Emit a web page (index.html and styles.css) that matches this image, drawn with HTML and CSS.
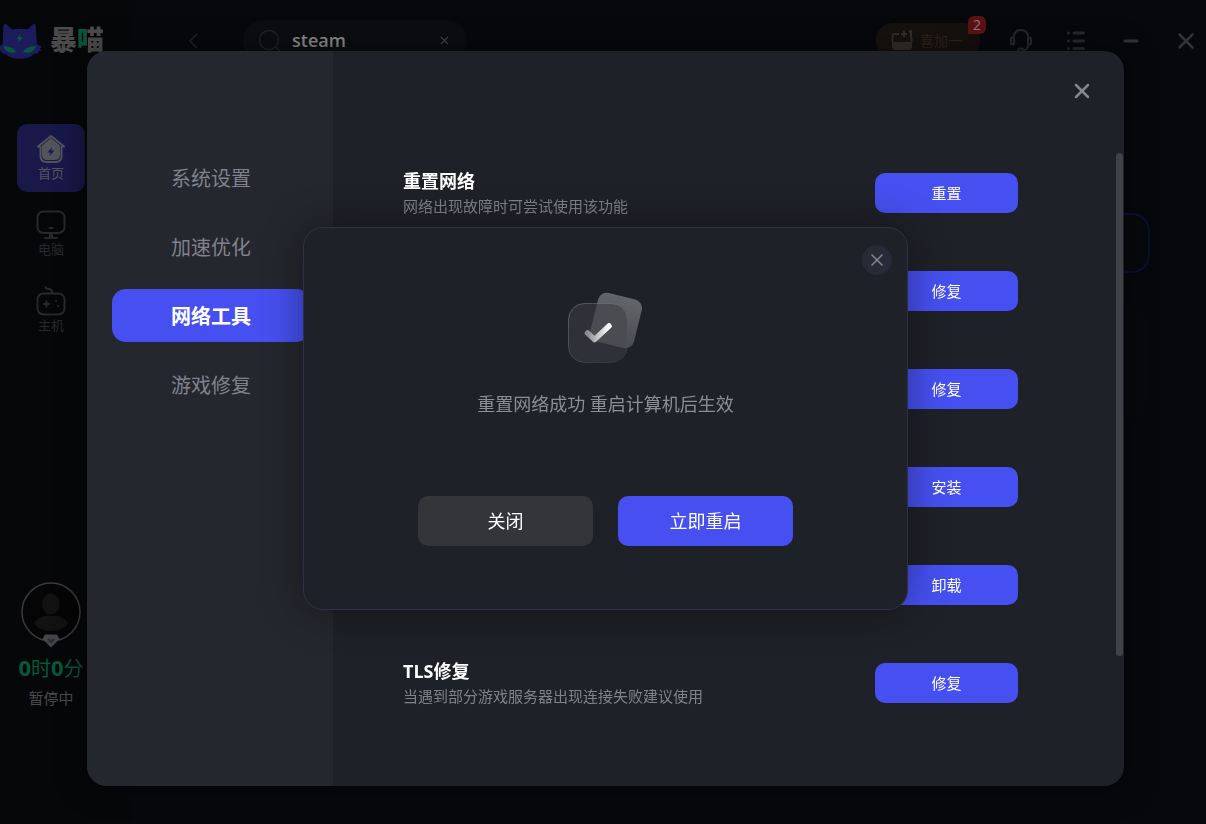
FILE: index.html
```html
<!DOCTYPE html>
<html lang="zh-CN">

<head>
    <meta charset="UTF-8">
    <meta name="viewport" content="width=device-width, initial-scale=1.0">
    <title>暴喵</title>
    <link rel="stylesheet" href="styles.css">
</head>

<body>
    <div class="app">
        <aside class="sidebar">
            <div class="brand">
                <svg class="brand-logo" viewBox="0 66 129 111">
                    <path fill="#1c1c5c" d="M10 78Q12 70 18 72L36 88Q60 84 84 88L100 72Q106 68 107 78L111 132L125 140L119 146L125 151L114 155L116 160L104 161Q88 176 60 176Q32 176 14 161L4 160L6 155L-5 151L1 146L-4 140L8 132Z" />
                    <path fill="#07573a" d="M62 102L49 118H57L54 130L69 112H60ZM10 138Q40 138 48 157Q20 164 10 138ZM108 138Q78 138 69 157Q98 164 108 138Z" />
                </svg>
                <span class="brand-name">暴<span class="brand-accent">喵</span></span>
            </div>
            <nav class="side-nav">
                <a class="side-link active" href="#">
                    <svg class="side-icon" viewBox="0 0 30 30">
                        <path fill="none" stroke="#53535a" stroke-width="2" stroke-linejoin="round" d="M2 12.500L15 2L28 12.500L25.500 13V22Q25.500 28 19.500 28H10.500Q4.500 28 4.500 22V13Z" />
                        <path fill="#53535a" d="M15 4L24 11.500V21Q24 26 19 26H11Q6 26 6 21V11.500Z" />
                        <path fill="#1a1a58" d="M16 13L11.500 18.500H14.500L13.500 22L18.500 16.500H15.500Z" />
                    </svg>
                    <span>首页</span>
                </a>
                <a class="side-link" href="#">
                    <svg class="side-icon" viewBox="0 0 30 30" fill="none" stroke="#29292c" stroke-width="2">
                        <rect x="1.500" y="1.500" width="27" height="21.500" rx="6" />
                        <path stroke-linecap="round" d="M13.500 18H16.500M9 28H21" />
                        <path stroke-width="4" d="M15 23V27" />
                    </svg>
                    <span>电脑</span>
                </a>
                <a class="side-link" href="#">
                    <svg class="side-icon" viewBox="0 0 30 30" fill="none" stroke="#29292c" stroke-width="2">
                        <rect x="1.500" y="7.500" width="27" height="21" rx="6" />
                        <path stroke-linecap="round" d="M16 7Q16 3 13 3Q10 3 9.500 1M8 18H13M10.500 15.500V20.500" />
                        <path stroke-linecap="round" d="M20 15H20.100M22 20H22.100" />
                    </svg>
                    <span>主机</span>
                </a>
            </nav>
            <div class="user">
                <svg class="avatar" viewBox="0 0 60 66">
                    <circle cx="30" cy="30" r="29" fill="#050506" stroke="#3c3c3e" stroke-width="1.500" />
                    <ellipse cx="30" cy="22" rx="9" ry="10.500" fill="#121213" />
                    <path fill="#121213" d="M13 41Q19 32 30 34Q41 32 47 41Q42 49 30 49Q18 49 13 41Z" />
                    <path fill="#454548" d="M24 52.500H36L38.500 57L30 65.500L21.500 57Z" />
                    <path fill="none" stroke="#292a38" stroke-width="2" d="M27 57L30 60.500L33 57" />
                </svg>
                <div class="user-time"><b>0</b>时<b>0</b>分</div>
                <div class="user-state">暂停中</div>
            </div>
        </aside>

        <main class="main">
            <header class="topbar">
                <button class="icon-btn" aria-label="返回">
                    <svg viewBox="0 0 24 24" fill="none" stroke="#222225" stroke-width="1.500"><path d="M15 5L8 12L15 19" /></svg>
                </button>
                <div class="search">
                    <svg class="search-icon" viewBox="0 0 24 24" fill="none" stroke="#222225" stroke-width="1.500">
                        <circle cx="11" cy="11" r="9.500" />
                        <path d="M17.500 18L22 22" />
                    </svg>
                    <input class="search-input" type="text" value="steam" aria-label="搜索">
                    <button class="search-clear" aria-label="清除">
                        <svg viewBox="0 0 10 10" fill="none" stroke="#4b4b4e" stroke-width="1.200"><path d="M1 1L9 9M9 1L1 9" /></svg>
                    </button>
                </div>
                <button class="promo">
                    <svg class="promo-icon" viewBox="0 0 22 22" fill="none" stroke="#332e28" stroke-width="2">
                        <path d="M8 5H3Q1.500 5 1.500 6.500V13M20.500 9V13M10 5H16M13 2V8M18 3L20 2V9" />
                        <path fill="#332e28" stroke="none" d="M1 13H21V18Q21 21 18 21H4Q1 21 1 18Z" />
                    </svg>
                    喜加一
                    <span class="promo-badge">2</span>
                </button>
                <div class="window-tools">
                    <button class="icon-btn" aria-label="客服">
                        <svg viewBox="0 0 24 24" fill="none" stroke="#29292c" stroke-width="2">
                            <path d="M4.500 9Q5 1 12 1T19.500 9M19.500 15Q19 21 15 21" />
                            <rect x="2" y="8.500" width="3" height="7" rx="1.500" />
                            <rect x="19" y="8.500" width="3" height="7" rx="1.500" />
                            <ellipse cx="12" cy="21" rx="3" ry="1.500" />
                        </svg>
                    </button>
                    <button class="icon-btn" aria-label="菜单">
                        <svg viewBox="0 0 24 24" fill="none" stroke="#29292c" stroke-width="3" stroke-linecap="round">
                            <path d="M4.500 4H4.600M10 4H19.500M4.500 12H4.600M10 12H19.500M4.500 19.500H4.600M10 19.500H19.500" />
                        </svg>
                    </button>
                    <button class="icon-btn" aria-label="最小化">
                        <svg viewBox="0 0 24 24" fill="none" stroke="#333336" stroke-width="3" stroke-linecap="round"><path d="M6 12H18" /></svg>
                    </button>
                    <button class="icon-btn" aria-label="关闭窗口">
                        <svg viewBox="0 0 24 24" fill="none" stroke="#333336" stroke-width="2.500" stroke-linecap="round"><path d="M5.500 5.500L18.500 18.500M18.500 5.500L5.500 18.500" /></svg>
                    </button>
                </div>
            </header>
            <div class="cards">
                <div class="card card-selected"></div>
                <div class="card"></div>
            </div>
        </main>
    </div>

    <div class="overlay">
        <section class="settings" role="dialog" aria-label="网络工具">
            <nav class="settings-nav">
                <a class="settings-link" href="#">系统设置</a>
                <a class="settings-link" href="#">加速优化</a>
                <a class="settings-link active" href="#">网络工具</a>
                <a class="settings-link" href="#">游戏修复</a>
            </nav>
            <div class="settings-main">
                <div class="settings-head">
                    <button class="settings-close" aria-label="关闭设置">
                        <svg viewBox="0 0 16 16" fill="none" stroke="#85868a" stroke-width="2.500" stroke-linecap="round"><path d="M2 2L14 14M14 2L2 14" /></svg>
                    </button>
                </div>
                <div class="settings-body">
                    <ul class="tools">
                        <li class="tool">
                            <div>
                                <h3 class="tool-title">重置网络</h3>
                                <p class="tool-text">网络出现故障时可尝试使用该功能</p>
                            </div>
                            <button class="tool-btn">重置</button>
                        </li>
                        <li class="tool"><button class="tool-btn">修复</button></li>
                        <li class="tool"><button class="tool-btn">修复</button></li>
                        <li class="tool"><button class="tool-btn">安装</button></li>
                        <li class="tool"><button class="tool-btn">卸载</button></li>
                        <li class="tool">
                            <div>
                                <h3 class="tool-title">TLS修复</h3>
                                <p class="tool-text">当遇到部分游戏服务器出现连接失败建议使用</p>
                            </div>
                            <button class="tool-btn">修复</button>
                        </li>
                    </ul>
                    <div class="scrollbar"></div>
                </div>
            </div>

            <div class="confirm-layer">
                <div class="confirm" role="alertdialog" aria-labelledby="confirm-text">
                    <button class="confirm-close" aria-label="关闭提示">
                        <svg viewBox="0 0 14 14" fill="none" stroke="#85868c" stroke-width="1.500"><path d="M1.500 1.500L12.500 12.500M12.500 1.500L1.500 12.500" /></svg>
                    </button>
                    <svg class="confirm-icon" viewBox="0 0 76 72">
                        <defs>
                            <linearGradient id="back" x1="0" y1="0" x2="0" y2="1">
                                <stop offset="0" stop-color="#64656a" />
                                <stop offset="1" stop-color="#4a4a52" />
                            </linearGradient>
                            <linearGradient id="edge" x1="0" y1="0" x2="1" y2="1">
                                <stop offset="0" stop-color="#fff" stop-opacity=".25" />
                                <stop offset="1" stop-color="#fff" stop-opacity=".02" />
                            </linearGradient>
                            <linearGradient id="tick" x1="0" y1="0" x2="1" y2="0">
                                <stop offset="0" stop-color="#8d8d90" />
                                <stop offset="1" stop-color="#fff" />
                            </linearGradient>
                            <clipPath id="front">
                                <rect x="0.500" y="11.500" width="59" height="59" rx="16" />
                            </clipPath>
                        </defs>
                        <rect x="25.500" y="3.500" width="45" height="50" rx="9" fill="url(#back)" transform="rotate(14 48 28.500)" />
                        <rect x="0.500" y="11.500" width="59" height="59" rx="16" fill="#303138" />
                        <g clip-path="url(#front)">
                            <rect x="25.500" y="3.500" width="45" height="50" rx="9" fill="#4b4b52" transform="rotate(14 48 28.500)" />
                        </g>
                        <rect x="0.500" y="11.500" width="59" height="59" rx="16" fill="none" stroke="url(#edge)" />
                        <path d="M19.500 41L26.500 47.500L41 34" fill="none" stroke="url(#tick)" stroke-width="5.500" stroke-linecap="round" stroke-linejoin="round" />
                    </svg>
                    <p class="confirm-text" id="confirm-text">重置网络成功 重启计算机后生效</p>
                    <div class="confirm-actions">
                        <button class="confirm-btn">关闭</button>
                        <button class="confirm-btn primary">立即重启</button>
                    </div>
                </div>
            </div>
        </section>
    </div>
</body>

</html>
```
FILE: styles.css
```css
* {
    box-sizing: border-box;
}

body {
    margin: 0;
    background-color: #07080c;
    color: #fff;
    font-family: "Open Sans", "Noto Sans CJK SC", sans-serif;
}

ul {
    list-style: none;
    padding-left: 0;
    margin: 0;
}

a {
    text-decoration: none;
}

button {
    padding: 0;
    border: none;
    background: none;
    color: inherit;
    font-family: inherit;
    cursor: pointer;
}

svg {
    display: block;
}

.app {
    display: flex;
    min-height: 100vh;
}

/* sidebar */
.sidebar {
    display: flex;
    flex-direction: column;
    width: 133px;
    padding: 21px 0 114px;
    background-color: #060709;
}

.brand {
    display: flex;
    align-items: center;
    gap: 7px;
    height: 38px;
}

.brand-logo {
    width: 43px;
    height: 37px;
}

.brand-name {
    font-size: 27px;
    line-height: 38px;
    font-weight: 900;
    color: #4b4b4c;
}

.brand-accent {
    background: linear-gradient(to right, #07573a 35%, #4b4b4c 35%);
    background-clip: text;
    -webkit-background-clip: text;
    color: transparent;
}

.side-nav {
    display: flex;
    flex-direction: column;
    gap: 8px;
    margin: 65px 0 0 17px;
}

.side-link {
    display: flex;
    flex-direction: column;
    align-items: center;
    width: 68px;
    height: 68px;
    padding-top: 10px;
    border-radius: 10px;
    color: #29292c;
    font-size: 13px;
    line-height: 18px;
}

.side-link.active {
    background-color: #181849;
    color: #55555e;
}

.side-icon {
    width: 30px;
    height: 30px;
}

.user {
    width: 102px;
    margin-top: auto;
    text-align: center;
}

.avatar {
    width: 60px;
    height: 66px;
    margin: 0 auto;
}

.user-time {
    margin-top: 4px;
    font-size: 20px;
    line-height: 30px;
    color: #07573a;
}

.user-time b {
    font-size: 22px;
}

.user-state {
    margin-top: 2px;
    font-size: 15px;
    line-height: 24px;
    color: #4b4b4c;
}

/* page behind the dialogs */
.main {
    flex: 1;
}

.topbar {
    display: flex;
    align-items: center;
    height: 81px;
    padding: 0 8px 0 49px;
}

.icon-btn,
.icon-btn svg {
    width: 24px;
    height: 24px;
}

.search {
    display: flex;
    align-items: center;
    width: 224px;
    height: 41px;
    margin-left: 37px;
    padding: 0 18px 0 15px;
    border-radius: 20px;
    background-color: #0c0d10;
}

.search-icon {
    width: 24px;
    height: 24px;
}

.search-input {
    flex: 1;
    min-width: 0;
    padding: 0 0 2px 10px;
    border: none;
    outline: none;
    background: none;
    color: #8b8b8d;
    font-family: inherit;
    font-size: 18px;
    font-weight: 600;
}

.search-clear svg {
    width: 9px;
    height: 9px;
}

.promo {
    position: relative;
    display: flex;
    align-items: center;
    gap: 7px;
    width: 104px;
    height: 35px;
    margin: 0 29px 0 auto;
    padding: 0 0 2px 15px;
    border-radius: 18px;
    background: linear-gradient(to right, #16130f, #15100c);
    color: #30231b;
    font-size: 14px;
}

.promo-icon {
    width: 22px;
    height: 22px;
}

.promo-badge {
    position: absolute;
    top: -7px;
    right: -6px;
    width: 18px;
    border-radius: 6px 6px 6px 0;
    background-color: #5b1214;
    color: #8d7c7c;
    font-size: 14px;
    line-height: 18px;
}

.window-tools {
    display: flex;
    gap: 31px;
}

.cards {
    display: flex;
    flex-direction: column;
    gap: 31px;
    padding: 132px 56px 0;
}

.card {
    height: 113px;
    border-radius: 18px;
    background-color: #08090c;
}

.card-selected {
    height: 60px;
    border: 2px solid #0c1030;
}

/* settings dialog */
.overlay {
    position: fixed;
    inset: 0;
    display: flex;
    padding: 51px 82px 38px 87px;
}

.settings {
    position: relative;
    display: flex;
    flex: 1;
    border-radius: 20px;
    background-color: #1f2128;
    box-shadow: 0 0 30px rgba(0, 0, 0, 0.5);
}

.settings-nav {
    display: flex;
    flex-direction: column;
    gap: 16px;
    width: 246px;
    padding: 100px 23px 0 25px;
    border-radius: 20px 0 0 20px;
    background-color: #25272e;
}

.settings-link {
    height: 53px;
    padding-top: 1px;
    border-radius: 14px;
    color: #80818b;
    font-size: 20px;
    line-height: 53px;
    text-align: center;
}

.settings-link.active {
    background-color: #4650f0;
    color: #fff;
    font-weight: 700;
}

.settings-main {
    display: flex;
    flex-direction: column;
    flex: 1;
}

.settings-head {
    display: flex;
    justify-content: flex-end;
    height: 102px;
    padding: 24px 26px 0 0;
}

.settings-close {
    width: 32px;
    height: 32px;
}

.settings-close svg {
    width: 16px;
    height: 16px;
    margin: 0 auto;
}

.settings-body {
    display: flex;
    gap: 98px;
    padding: 0 1px 0 70px;
}

.tools {
    display: flex;
    flex-direction: column;
    flex: 1;
    gap: 48px;
    padding-top: 15px;
}

.tool {
    display: flex;
    align-items: center;
    height: 50px;
}

.tool-title {
    margin: 0;
    font-size: 18px;
    line-height: 26px;
    font-weight: 700;
}

.tool-text {
    margin: 0;
    color: #80818b;
    font-size: 15px;
    line-height: 24px;
}

.tool-btn {
    width: 143px;
    height: 40px;
    margin-left: auto;
    padding-bottom: 2px;
    border-radius: 10px;
    background-color: #4650f0;
    font-size: 15px;
}

.scrollbar {
    width: 7px;
    height: 503px;
    border-radius: 4px;
    background-color: #404248;
}

/* confirm dialog */
.confirm-layer {
    position: absolute;
    inset: 0;
    display: flex;
    align-items: center;
    justify-content: center;
}

.confirm {
    position: relative;
    display: flex;
    flex-direction: column;
    align-items: center;
    width: 605px;
    padding: 64px 0 63px;
    border: 1px solid #303146;
    border-radius: 20px;
    background-color: #1f2128;
    box-shadow: 0 0 40px rgba(0, 0, 0, 0.4);
}

.confirm-close {
    position: absolute;
    top: 17px;
    right: 15px;
    width: 30px;
    height: 30px;
    border-radius: 50%;
    background-color: #292a38;
}

.confirm-close svg {
    width: 14px;
    height: 14px;
    margin: 0 auto;
}

.confirm-icon {
    width: 76px;
    height: 72px;
}

.confirm-text {
    margin: 27px 0 79px;
    color: #8c8d96;
    font-size: 18px;
    line-height: 26px;
}

.confirm-actions {
    display: flex;
    gap: 25px;
}

.confirm-btn {
    width: 175px;
    height: 50px;
    padding-bottom: 2px;
    border-radius: 10px;
    background-color: #343539;
    font-size: 18px;
}

.confirm-btn.primary {
    background-color: #4650f0;
}
```
